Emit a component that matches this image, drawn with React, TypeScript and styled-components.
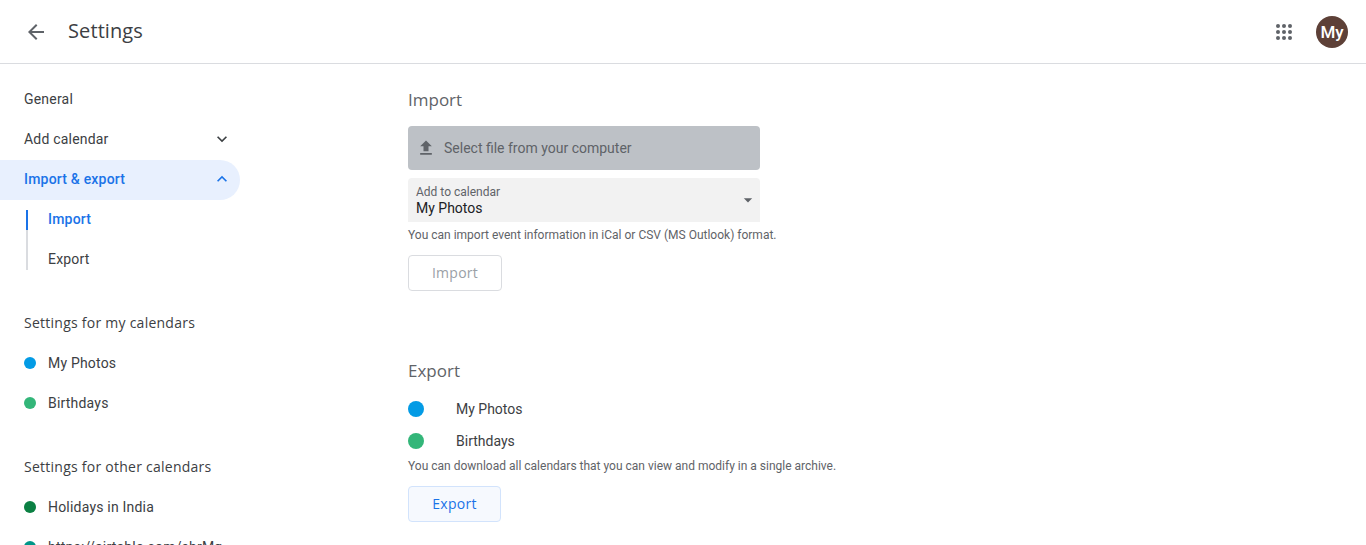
import React from "react";
import styled, { createGlobalStyle } from "styled-components";
import { MdArrowBack, MdFileUpload, MdExpandMore, MdExpandLess, MdArrowDropDown } from "react-icons/md";

const GlobalStyle = createGlobalStyle`
  html, body {
    margin: 0;
    height: 100%;
    overflow: hidden;
    background: #fff;
    font-family: Roboto, "Liberation Sans", sans-serif;
  }
`;

const Page = styled.div`
  height: 545px;
  overflow: hidden;
  display: flex;
  flex-direction: column;
`;

const Header = styled.header`
  height: 63px;
  flex: none;
  display: flex;
  align-items: center;
  padding: 0 18px 0 24px;
  border-bottom: 1px solid #dadce0;
  color: #5f6368;
`;

const Title = styled.h1`
  margin: 0 0 2px 20px;
  flex: 1;
  font: 400 20px "Open Sans", sans-serif;
  letter-spacing: 0.1px;
  color: #3c4043;
`;

const Avatar = styled.div`
  width: 32px;
  height: 32px;
  margin-left: 20px;
  border-radius: 50%;
  background: #5d4037;
  color: #fff;
  font-size: 17px;
  font-weight: 500;
  display: flex;
  align-items: center;
  justify-content: center;
`;

const Body = styled.div`
  flex: 1;
  display: flex;
  min-height: 0;
`;

const Sidebar = styled.nav`
  width: 240px;
  flex: none;
  margin-right: 168px;
  padding-top: 15px;
`;

const NavRow = styled.div<{ $active?: boolean }>`
  height: 40px;
  box-sizing: border-box;
  display: flex;
  align-items: center;
  justify-content: space-between;
  padding: 0 8px ${(p) => (p.$active ? "2px" : "0")} 24px;
  margin-top: ${(p) => (p.$active ? "1px" : "0")};
  font-size: 14px;
  letter-spacing: 0.2px;
  font-weight: ${(p) => (p.$active ? 500 : 400)};
  color: ${(p) => (p.$active ? "#1a73e8" : "#3c4043")};
  background: ${(p) => (p.$active ? "#e8f0fe" : "transparent")};
  border-radius: ${(p) => (p.$active ? "0 20px 20px 0" : "0")};
`;

const SubList = styled.div`
  display: flow-root;
  position: relative;
  margin: 10px 0 0 26px;
  height: 60px;
  border-left: 2px solid #dadce0;
`;

const ActiveMark = styled.span`
  position: absolute;
  left: -2px;
  top: 0;
  width: 2px;
  height: 20px;
  background: #1a73e8;
`;

const SubRow = styled.div<{ $active?: boolean }>`
  height: 40px;
  margin: -11px 0 0 -2px;
  padding-left: 22px;
  display: flex;
  align-items: center;
  font-size: 14px;
  letter-spacing: 0.2px;
  font-weight: ${(p) => (p.$active ? 500 : 400)};
  color: ${(p) => (p.$active ? "#1a73e8" : "#3c4043")};
  & + & {
    margin-top: 0;
  }
`;

const SideHeading = styled.div<{ $top: number }>`
  height: 40px;
  box-sizing: border-box;
  margin-top: ${(p) => p.$top}px;
  padding: 0 0 2px 24px;
  display: flex;
  align-items: center;
  font: 500 14px "Open Sans", sans-serif;
  letter-spacing: 0.25px;
  color: #3c4043;
`;

const CalRow = styled.div`
  height: 40px;
  display: flex;
  align-items: center;
  padding-left: 24px;
  font-size: 14px;
  letter-spacing: 0.2px;
  color: #3c4043;
  white-space: nowrap;
`;

const Dot = styled.span<{ $color: string; $size: number; $gap: number }>`
  width: ${(p) => p.$size}px;
  height: ${(p) => p.$size}px;
  flex: none;
  border-radius: 50%;
  background: ${(p) => p.$color};
  margin-right: ${(p) => p.$gap}px;
`;

const Main = styled.main`
  flex: 1;
  padding-top: 23px;
`;

const SectionTitle = styled.h2`
  margin: 0;
  height: 26px;
  font: 400 17px/26px "Open Sans", sans-serif;
  color: #5f6368;
`;

const FilePicker = styled.div`
  width: 352px;
  height: 44px;
  margin-top: 13px;
  box-sizing: border-box;
  padding-left: 8px;
  display: flex;
  align-items: center;
  gap: 8px;
  border-radius: 4px;
  background: #bdc1c6;
  color: #5f6368;
  font-size: 14px;
`;

const SelectBox = styled.div`
  width: 352px;
  height: 44px;
  margin-top: 8px;
  box-sizing: border-box;
  padding: 7px 4px 0 8px;
  position: relative;
  border-radius: 4px 4px 0 0;
  background: #f2f2f2;
`;

const SelectLabel = styled.div`
  font-size: 12px;
  line-height: 14px;
  color: #5f6368;
`;

const SelectValue = styled.div`
  font-size: 14px;
  line-height: 18px;
  color: #202124;
`;

const SelectArrow = styled.span`
  position: absolute;
  right: 2px;
  top: 12px;
  display: flex;
  color: #5f6368;
`;

const Hint = styled.p`
  margin: 0;
  height: 14px;
  line-height: 14px;
  font-size: 12px;
  color: #5f6368;
`;

const ImportHint = styled(Hint)`
  margin-top: 6px;
`;

const ExportHint = styled(Hint)`
  margin-top: 2px;
`;

const ActionButton = styled.button<{ $enabled?: boolean }>`
  display: block;
  height: 36px;
  box-sizing: border-box;
  padding: 0 0 2px;
  border-radius: 4px;
  border: 1px solid ${(p) => (p.$enabled ? "#d2e3fc" : "#dadce0")};
  background: ${(p) => (p.$enabled ? "#f6f9fe" : "#fff")};
  color: ${(p) => (p.$enabled ? "#1a73e8" : "#9aa0a6")};
  font: 500 14px "Open Sans", sans-serif;
  letter-spacing: 0.25px;
`;

const ImportButton = styled(ActionButton)`
  width: 94px;
  margin-top: 13px;
`;

const ExportButton = styled(ActionButton)`
  width: 93px;
  margin-top: 13px;
`;

const ExportSection = styled.section`
  margin-top: 67px;
`;

const ExportList = styled.div`
  margin-top: 9px;
`;

const ExportRow = styled.div`
  height: 32px;
  display: flex;
  align-items: center;
  font-size: 14px;
  color: #3c4043;
`;

// nine round dots, the icon set only has the square version
function AppsIcon() {
  const spots = [6, 12, 18];
  return (
    <svg width="24" height="24" viewBox="0 0 24 24" fill="#5f6368">
      {spots.map((y) => spots.map((x) => <circle key={`${x}-${y}`} cx={x} cy={y} r="2" />))}
    </svg>
  );
}

export default function App() {
  return (
    <>
      <GlobalStyle />
      <Page>
        <Header>
          <MdArrowBack size={24} />
          <Title>Settings</Title>
          <AppsIcon />
          <Avatar>My</Avatar>
        </Header>
        <Body>
          <Sidebar>
            <NavRow>General</NavRow>
            <NavRow>
              Add calendar
              <MdExpandMore size={20} color="#3c4043" />
            </NavRow>
            <NavRow $active>
              Import &amp; export
              <MdExpandLess size={20} color="#1a73e8" />
            </NavRow>
            <SubList>
              <ActiveMark />
              <SubRow $active>Import</SubRow>
              <SubRow>Export</SubRow>
            </SubList>
            <SideHeading $top={33}>Settings for my calendars</SideHeading>
            <CalRow>
              <Dot $color="#039be5" $size={12} $gap={12} />
              My Photos
            </CalRow>
            <CalRow>
              <Dot $color="#33b679" $size={12} $gap={12} />
              Birthdays
            </CalRow>
            <SideHeading $top={24}>Settings for other calendars</SideHeading>
            <CalRow>
              <Dot $color="#0b8043" $size={12} $gap={12} />
              Holidays in India
            </CalRow>
            <CalRow>
              <Dot $color="#009688" $size={12} $gap={12} />
              https://airtable.com/shrMg
            </CalRow>
          </Sidebar>
          <Main>
            <section>
              <SectionTitle>Import</SectionTitle>
              <FilePicker>
                <MdFileUpload size={20} />
                Select file from your computer
              </FilePicker>
              <SelectBox>
                <SelectLabel>Add to calendar</SelectLabel>
                <SelectValue>My Photos</SelectValue>
                <SelectArrow>
                  <MdArrowDropDown size={20} />
                </SelectArrow>
              </SelectBox>
              <ImportHint>You can import event information in iCal or CSV (MS Outlook) format.</ImportHint>
              <ImportButton>Import</ImportButton>
            </section>
            <ExportSection>
              <SectionTitle>Export</SectionTitle>
              <ExportList>
                <ExportRow>
                  <Dot $color="#039be5" $size={16} $gap={32} />
                  My Photos
                </ExportRow>
                <ExportRow>
                  <Dot $color="#33b679" $size={16} $gap={32} />
                  Birthdays
                </ExportRow>
              </ExportList>
              <ExportHint>You can download all calendars that you can view and modify in a single archive.</ExportHint>
              <ExportButton $enabled>Export</ExportButton>
            </ExportSection>
          </Main>
        </Body>
      </Page>
    </>
  );
}
